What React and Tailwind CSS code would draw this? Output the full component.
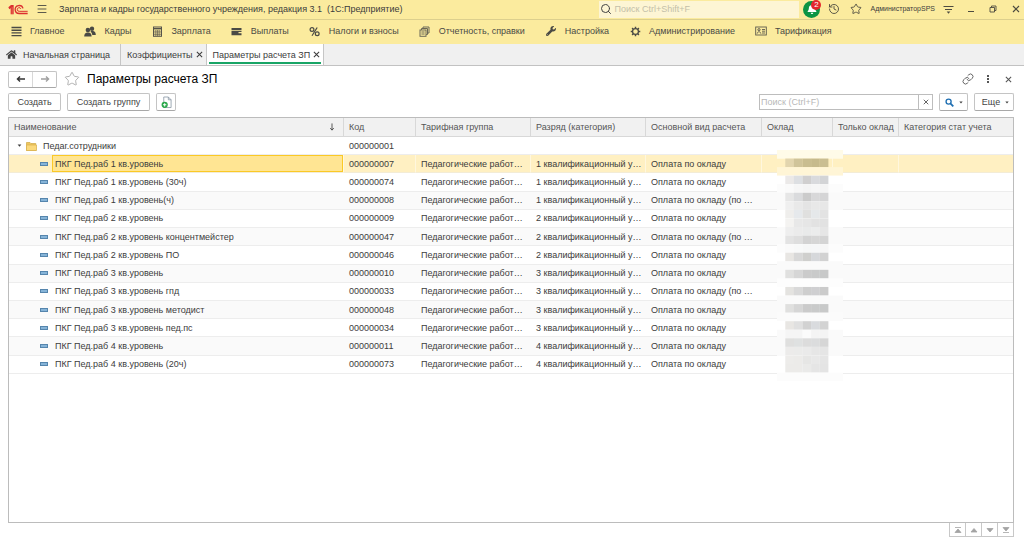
import React from "react";
import { History, Menu, Search, Star } from "lucide-react";
import { FaBell, FaHome, FaWrench } from "react-icons/fa";

function Logo() {
  return (
    <svg viewBox="0 0 60 33" className="h-[11px] w-[20px]" fill="none" stroke="#dc2f2f">
      <path d="M1 10L9 3H17V31H8V13L4 16Z" fill="#dc2f2f" stroke="none" />
      <path d="M12.500 9V31" stroke="#f3a37c" strokeWidth="1.500" />
      <path d="M45 13A12 12 0 1 0 33.500 28.500H59" strokeWidth="4" />
      <path d="M38.500 14.500A5.500 5.500 0 1 0 33.500 22H59" strokeWidth="3" />
    </svg>
  );
}

function LinesIcon() {
  return (
    <svg viewBox="0 0 11 11" className="size-[11px]" stroke="#4a4a45" strokeWidth="1.400">
      <path d="M0.500 1.500H10.500M0.500 4.200H10.500M0.500 6.900H10.500M0.500 9.600H10.500" />
    </svg>
  );
}

function PeopleIcon() {
  return (
    <svg viewBox="0 0 12 11" className="h-[11px] w-[12px]" fill="#4a4a45">
      <circle cx="8" cy="2.800" r="2.200" />
      <path d="M6.900 5H9.200C11 5.500 11.800 6.700 11.800 9H8.300C8 7.200 7.600 6.500 6.600 6.100Z" />
      <circle cx="3.900" cy="4" r="2.300" />
      <path d="M0.200 10.500C0.200 8 1.200 6.700 3 6.400H4.900C6.700 6.700 7.600 8 7.600 10.500Z" />
    </svg>
  );
}

function CalculatorIcon() {
  return (
    <svg viewBox="0 0 11 11" className="size-[11px]" stroke="#55534a">
      <rect x="1.500" y="1" width="8" height="9.300" fill="none" strokeWidth="1" />
      <path d="M2 2.700H9" strokeWidth="1.400" />
      <path d="M2 5.200H9M2 6.900H9M2 8.600H9M3.800 4V10M5.500 4V10M7.200 4V10" strokeWidth="0.600" />
    </svg>
  );
}

function WalletIcon() {
  return (
    <svg viewBox="0 0 11 11" className="size-[11px]" fill="#4a4a45">
      <rect x="0.500" y="2" width="10" height="2" />
      <path d="M0.500 4.700H10.500V6H7.500V7.300H10.500V9.200H0.500Z" />
    </svg>
  );
}

function PercentIcon() {
  return (
    <svg viewBox="0 0 11 11" className="size-[11px]" fill="none" stroke="#4a4a45" strokeWidth="1.200">
      <circle cx="3" cy="3.500" r="1.900" />
      <circle cx="8.200" cy="7.800" r="1.900" />
      <path d="M8.200 1.500L3 9.800" />
    </svg>
  );
}

function SheetsIcon() {
  return (
    <svg viewBox="0 0 11 11" className="size-[11px]" fill="none" stroke="#6b6856" strokeWidth="1">
      <path d="M4 2.500V1H10V7H8.800M2.500 4V2.500H8.500V8.500H7.200" />
      <rect x="1" y="4" width="6" height="6.300" />
      <path d="M2.400 6H5.600M2.400 8H5.600" />
    </svg>
  );
}

function GearIcon() {
  return (
    <svg viewBox="0 0 12 12" className="size-[11px]" fill="none" stroke="#4a4a45">
      <circle cx="6" cy="6" r="3.200" strokeWidth="1.400" />
      <path
        d="M6 0.800V2.400M6 9.600V11.200M0.800 6H2.400M9.600 6H11.200M2.300 2.300L3.500 3.500M8.500 8.500L9.700 9.700M9.700 2.300L8.500 3.500M2.300 9.700L3.500 8.500"
        strokeWidth="1.600"
      />
    </svg>
  );
}

function CardIcon() {
  return (
    <svg viewBox="0 0 12 10" className="h-[10px] w-[12px]" fill="none" stroke="#5c5a4c">
      <rect x="0.700" y="1" width="10.600" height="8" strokeWidth="0.900" />
      <circle cx="4" cy="3.700" r="1.100" />
      <path d="M2.200 7.600C2.200 5.200 5.800 5.200 5.800 7.600M7 3.500H10M7 5.200H10M7 7H10" strokeWidth="0.900" />
    </svg>
  );
}

function Cross({ className }) {
  return (
    <svg viewBox="0 0 8 8" className={className} stroke="currentColor" strokeWidth="1.200">
      <path d="M1 1L7 7M7 1L1 7" />
    </svg>
  );
}

function Caret({ className }) {
  return (
    <svg viewBox="0 0 6 4" className={className} fill="currentColor">
      <path d="M0.500 0.500H5.500L3 3.500Z" />
    </svg>
  );
}

function Arrow({ className, flip }) {
  return (
    <svg viewBox="0 0 12 10" className={className} fill="none" stroke="currentColor" strokeWidth="1.700">
      <path d={flip ? "M1 5H10.500M7.200 1.800L10.500 5L7.200 8.200" : "M11 5H1.500M4.800 1.800L1.500 5L4.800 8.200"} />
    </svg>
  );
}

function NewSheetIcon() {
  return (
    <svg viewBox="0 0 12 14" className="h-[13px] w-[11px]">
      <path d="M3 1H8L11 4V12.500H3Z" fill="#fff" stroke="#8c99a6" strokeWidth="0.900" />
      <path d="M8 1V4H11" fill="none" stroke="#8c99a6" strokeWidth="0.900" />
      <circle cx="4" cy="9.500" r="3.400" fill="#2aa84a" />
      <path d="M4 7.700V11.300M2.200 9.500H5.800" stroke="#fff" strokeWidth="1.100" />
    </svg>
  );
}

function FolderIcon() {
  return (
    <svg viewBox="0 0 11 10" className="h-[10px] w-[11px] shrink-0">
      <path d="M0.500 1.500H4L5 2.500H9.800V9.500H0.500Z" fill="#efc75c" stroke="#cfa748" strokeWidth="0.700" />
      <path d="M0.500 4H10.500V9.500H0.500Z" fill="#fbd97c" stroke="#d8b04e" strokeWidth="0.700" />
    </svg>
  );
}

const menu = [
  ["Главное", <LinesIcon />],
  ["Кадры", <PeopleIcon />],
  ["Зарплата", <CalculatorIcon />],
  ["Выплаты", <WalletIcon />],
  ["Налоги и взносы", <PercentIcon />],
  ["Отчетность, справки", <SheetsIcon />],
  ["Настройка", <FaWrench className="size-[10px]" />],
  ["Администрирование", <GearIcon />],
  ["Тарификация", <CardIcon />],
];

const rows = [
  ["ПКГ Пед.раб 1 кв.уровень", "000000007", 1, false],
  ["ПКГ Пед.раб 1 кв.уровень (30ч)", "000000074", 1, false],
  ["ПКГ Пед.раб 1 кв.уровень(ч)", "000000008", 1, true],
  ["ПКГ Пед.раб 2 кв.уровень", "000000009", 2, false],
  ["ПКГ Пед.раб 2 кв.уровень концентмейстер", "000000047", 2, true],
  ["ПКГ Пед.раб 2 кв.уровень ПО", "000000046", 2, false],
  ["ПКГ Пед.раб 3 кв.уровень", "000000010", 3, false],
  ["ПКГ Пед.раб 3 кв.уровень гпд", "000000033", 3, true],
  ["ПКГ Пед.раб 3 кв.уровень методист", "000000048", 3, false],
  ["ПКГ Пед.раб 3 кв.уровень пед.пс", "000000034", 3, false],
  ["ПКГ Пед.раб 4 кв.уровень", "000000011", 4, false],
  ["ПКГ Пед.раб 4 кв.уровень (20ч)", "000000073", 4, false],
];

// Each band: the wide backing colour, then the colours of its five blocks.
const bands = [
  ["#fffbe8"],
  [null, "#e2d5ae", "#d0c49a", "#c9bd90", "#c6ba8c", "#cabe92"],
  ["#fff5d6"],
  ["#ffffff", "#ebe9e8", "#dddfe2", "#d0cfcf", "#d9dadd", "#d3d4d6"],
  ["#fcfcfc", "#fafafa", "#f6f6f6", "#f4f4f4", "#f6f6f6", "#f4f4f4"],
  ["#fafafa", "#e6e6e6", "#dadbdd", "#cbcbcb", "#d8d8d9", "#d5d5d6"],
  ["#fafafa", "#efefef", "#e9e9e9", "#e4e4e4", "#e8e8e8", "#e7e7e7"],
  ["#ffffff", "#efeeec", "#e6e9ec", "#e0e0df", "#e5e8ea", "#e3e3e3"],
  ["#ffffff", "#f4f3f1", "#e8e8e8", "#e6e6e6", "#e2e2e2", "#e2e2e2"],
  ["#fafafa", "#eeeeee", "#ebebeb", "#e9eaea", "#ebecec", "#e6e6e6"],
  ["#fafafa", "#e3e3e3", "#dedede", "#d3d3d3", "#d6d6d6", "#d4d4d4"],
  ["#fcfcfc", "#fafafa", "#f8f9f9", "#f6f7f7", "#f6f7f8", "#f6f6f6"],
  ["#ffffff", "#e8e6e3", "#d8d8d8", "#cfcfcd", "#d6d8db", "#d2d2d2"],
  ["#fafafa"],
  ["#fafafa", "#e0e0df", "#d6d6d6", "#cbcbcb", "#c9caca", "#c8c9c9"],
  ["#fdfdfd"],
  ["#ffffff", "#e4e3e0", "#d9d9d9", "#cecece", "#cfcfd1", "#cbcbcb"],
  ["#fafafa"],
  ["#fafafa", "#e0e0df", "#d6d6d6", "#cbcbcb", "#c9caca", "#c8c9c9"],
  ["#fbfbfb"],
  ["#ffffff", "#e8e6e3", "#e0e0e0", "#d2d2d2", "#d9dbde", "#d3d3d3"],
  ["#fafafa", "#f5f5f5", "#f5f5f5", "#fbfbfb", "#f4f4f4", "#f4f4f4"],
  ["#fafafa", "#dfdfde", "#dfe1e1", "#dcdcdc", "#dbdcdd", "#d6d6d6"],
  ["#fafafa", "#ecebea", "#ebebea", "#eaeaea", "#e6e6e6", "#e5e5e5"],
  ["#ffffff", "#edecea", "#ecebe9", "#e6e6e5", "#e8e8e8", "#e5e5e5"],
  ["#ffffff", "#ecebe9", "#ecebe9", "#eaeae9", "#e5e5e5", "#e4e4e4"],
  ["#fcfcfc"],
];

function Mosaic() {
  return (
    <svg
      viewBox="0 0 66 231"
      className="pointer-events-none absolute -top-[5px] left-[15px] h-[231px] w-[66px]"
      aria-hidden="true"
    >
      {bands.map(([back, ...blocks], i) => (
        <g key={i}>
          {back && <rect x="0" y={i * 8.56} width="66" height="8.7" fill={back} />}
          {blocks.map((fill, j) => (
            <rect key={j} x={8.3 + j * 8.6} y={i * 8.56} width="8.7" height="8.7" fill={fill} />
          ))}
        </g>
      ))}
    </svg>
  );
}

const button =
  "flex items-center justify-center rounded-[2px] border border-[#c4c4c4] border-b-[#a8a8a8] bg-white text-[#444]";
const cell = "whitespace-nowrap pl-[5px]";

export default function App() {
  return (
    <div className="flex min-h-screen flex-col bg-white font-['Liberation_Sans',Arial,sans-serif] text-[9px] leading-[12px] text-[#3c3c3c]">
      <header className="bg-[#fbeb9e]">
        <div className="flex h-[20px] items-center border-b border-[#dccf8d] pr-[4px] pb-[1px] pl-[8px]">
          <Logo />
          <button aria-label="Меню" className="ml-[8px] text-[#5c5a4c]">
            <Menu className="size-[12px]" strokeWidth={2} />
          </button>
          <span className="ml-[11px] whitespace-pre">
            Зарплата и кадры государственного учреждения, редакция 3.1  (1С:Предприятие)
          </span>
          <label className="ml-auto flex h-[17px] w-[200px] items-center gap-[2px] bg-[#fdf5d4] pl-[1px]">
            <Search className="size-[12px] text-[#444]" strokeWidth={2} />
            <input
              aria-label="Поиск"
              placeholder="Поиск Ctrl+Shift+F"
              className="min-w-0 flex-1 bg-transparent outline-none placeholder:text-[#c4bfa9]"
            />
          </label>
          <button
            aria-label="Уведомления"
            className="relative ml-[4px] flex size-[17px] items-center justify-center rounded-full bg-[#0b9444] text-white"
          >
            <FaBell className="size-[10px]" />
            <span className="absolute -top-[1px] -right-[1px] flex size-[10px] items-center justify-center rounded-full bg-[#e3262d] text-[8px] leading-[10px]">
              2
            </span>
          </button>
          <button aria-label="История" className="ml-[8px] text-[#4d4b40]">
            <History className="size-[12px]" strokeWidth={1.8} />
          </button>
          <button aria-label="Избранное" className="ml-[10px] text-[#4d4b40]">
            <Star className="size-[12px]" strokeWidth={1.8} />
          </button>
          <button className="ml-[8px] text-[7px]">АдминистраторSPS</button>
          <button aria-label="Настройки" className="ml-[8px] text-[#4d4b40]">
            <svg viewBox="0 0 11 11" className="size-[11px]" stroke="currentColor">
              <path d="M0.500 2.500H10.500M2 5.500H9" />
              <path d="M3.700 7.500H7.300L5.500 9.800Z" fill="currentColor" stroke="none" />
            </svg>
          </button>
          <button aria-label="Свернуть" className="ml-[13px] text-[#4d4b40]">
            <svg viewBox="0 0 8 8" className="size-[8px]" stroke="currentColor">
              <path d="M1 6.500H7" />
            </svg>
          </button>
          <button aria-label="Развернуть" className="ml-[14px] text-[#4d4b40]">
            <svg viewBox="0 0 8 8" className="size-[8px]" fill="none" stroke="currentColor" strokeWidth="0.900">
              <path d="M1 2.500H5.500V7H1ZM2.500 2.500V1H7V5.500H5.500" />
            </svg>
          </button>
          <button aria-label="Закрыть" className="ml-[15px] text-[#4d4b40]">
            <Cross className="size-[8px]" />
          </button>
        </div>
        <nav className="flex h-[24px] items-center gap-[20px] pb-[2px] pl-[10px] text-[#4a4a45]">
          {menu.map(([label, icon]) => (
            <a key={label} href="#" className="flex items-center gap-[8px] whitespace-nowrap">
              <span className="flex w-[12px] justify-center">{icon}</span>
              {label}
            </a>
          ))}
        </nav>
      </header>

      <div className="flex h-[22px] items-stretch border-b border-[#c2c2c2] bg-[#f0f0f0]">
        <button className="flex items-center gap-[6px] border-r border-[#c6c6c6] pr-[10px] pl-[6px]">
          <FaHome className="size-[11px] text-[#444]" />
          Начальная страница
        </button>
        <div className="flex items-center gap-[3px] border-r border-[#c6c6c6] pr-[3px] pl-[6px]">
          <a href="#">Коэффициенты</a>
          <button aria-label="Закрыть вкладку Коэффициенты">
            <Cross className="size-[7px]" />
          </button>
        </div>
        <div className="flex border-r border-[#c6c6c6] bg-white px-[2px] pb-[1px]">
          <div className="flex items-center gap-[3px] border-b-2 border-b-[#19a566] pt-[3px] pr-[1px] pl-[4px]">
            <a href="#">Параметры расчета ЗП</a>
            <button aria-label="Закрыть вкладку Параметры расчета ЗП">
              <Cross className="size-[7px]" />
            </button>
          </div>
        </div>
      </div>

      <main className="flex flex-1 flex-col px-[8px] pb-[5px]">
        <div className="flex h-[26px] items-center">
          <div className="flex h-[17px] w-[49px] rounded-[2px] border border-[#c4c4c4] border-b-[#a8a8a8]">
            <button aria-label="Назад" className="flex flex-1 items-center justify-center border-r border-[#d8d8d8]">
              <Arrow className="h-[8px] w-[10px] text-[#333]" />
            </button>
            <button aria-label="Вперед" className="flex flex-1 items-center justify-center">
              <Arrow flip className="h-[8px] w-[10px] text-[#a0a0a0]" />
            </button>
          </div>
          <button aria-label="Добавить в избранное" className="ml-[7px] text-[#a5a5a5]">
            <Star className="size-[16px]" strokeWidth={1.3} />
          </button>
          <h1 className="ml-[7px] text-[12px] leading-[16px] text-black">Параметры расчета ЗП</h1>
          <button aria-label="Получить ссылку" className="ml-auto text-[#666]">
            <svg viewBox="0 0 24 24" className="size-[12px]" fill="none" stroke="currentColor" strokeWidth="2" strokeLinecap="round">
              <path d="M10 13a5 5 0 0 0 7.540.540l3-3a5 5 0 0 0-7.070-7.070l-1.720 1.710" />
              <path d="M14 11a5 5 0 0 0-7.540-.540l-3 3a5 5 0 0 0 7.070 7.070l1.710-1.710" />
            </svg>
          </button>
          <button aria-label="Действия" className="ml-[12px] text-[#555]">
            <svg viewBox="0 0 4 10" className="h-[10px] w-[4px]" fill="currentColor">
              <rect x="1" y="1" width="2" height="2" />
              <rect x="1" y="4" width="2" height="2" />
              <rect x="1" y="7" width="2" height="2" />
            </svg>
          </button>
          <button aria-label="Закрыть" className="mr-[4px] ml-[15px] text-[#555]">
            <Cross className="size-[7px]" />
          </button>
        </div>

        <div className="mr-[2px] flex h-[20px] items-center">
          <button className={`${button} h-[18px] w-[53px]`}>Создать</button>
          <button className={`${button} ml-[6px] h-[18px] w-[83px]`}>Создать группу</button>
          <button aria-label="Создать копированием" className={`${button} ml-[6px] h-[18px] w-[20px]`}>
            <NewSheetIcon />
          </button>
          <div className="ml-auto flex h-[16px] w-[174px] border border-[#bdbdbd]">
            <input
              aria-label="Поиск по списку"
              placeholder="Поиск (Ctrl+F)"
              className="min-w-0 flex-1 px-px outline-none placeholder:text-[#b8b8b8]"
            />
            <button
              aria-label="Очистить поиск"
              className="flex w-[14px] items-center justify-center border-l border-[#bdbdbd] text-[#555]"
            >
              <Cross className="size-[6px]" />
            </button>
          </div>
          <button aria-label="Найти" className={`${button} ml-[6px] h-[18px] w-[29px] gap-[5px]`}>
            <svg viewBox="0 0 10 10" className="size-[9px]" fill="none" stroke="#1f6fb2">
              <circle cx="4" cy="4" r="2.800" strokeWidth="1.500" />
              <path d="M6.200 6.200L9.200 9.200" strokeWidth="2" />
            </svg>
            <Caret className="h-[3px] w-[4px]" />
          </button>
          <button className={`${button} ml-[6px] h-[18px] w-[40px] gap-[5px] pl-[3px]`}>
            Еще
            <Caret className="h-[3px] w-[4px]" />
          </button>
        </div>

        <div className="mt-[5px] mr-[2px] flex-1 border border-[#bcbcbc]">
          <table className="h-[256px] w-full table-fixed border-separate border-spacing-0 text-left">
            <colgroup>
              <col />
              <col className="w-[72px]" />
              <col className="w-[115px]" />
              <col className="w-[115px]" />
              <col className="w-[116px]" />
              <col className="w-[71px]" />
              <col className="w-[66px]" />
              <col className="w-[114px]" />
            </colgroup>
            <thead>
              <tr className="h-[19px] bg-[#f1f1f1] text-[#555] *:border-r *:border-b *:border-[#d8d8d8] *:p-0 *:font-normal *:last:border-r-0">
                <th>
                  <div className="flex items-center justify-between pr-[8px] pl-[5px]">
                    Наименование
                    <svg viewBox="0 0 6 9" className="h-[8px] w-[6px]" fill="none" stroke="#444">
                      <path d="M3 0.500V8M1 5.800L3 8L5 5.800" />
                    </svg>
                  </div>
                </th>
                <th><div className={cell}>Код</div></th>
                <th><div className={cell}>Тарифная группа</div></th>
                <th><div className={cell}>Разряд (категория)</div></th>
                <th><div className={cell}>Основной вид расчета</div></th>
                <th><div className={cell}>Оклад</div></th>
                <th><div className={cell}>Только оклад</div></th>
                <th><div className={cell}>Категория стат учета</div></th>
              </tr>
            </thead>
            <tbody>
              <tr className="h-[18px] *:border-b *:border-[#ededed] *:p-0">
                <td>
                  <div className="flex items-center pl-[8px]">
                    <Caret className="h-[3px] w-[5px]" />
                    <span className="ml-[4px]"><FolderIcon /></span>
                    <span className="ml-[6px]">Педаг.сотрудники</span>
                  </div>
                </td>
                <td><div className={cell}>000000001</div></td>
                <td colSpan={6}></td>
              </tr>
              {rows.map(([name, code, level, hourly], i) => (
                <tr
                  key={code}
                  className={
                    i === 0
                      ? "h-[18px] bg-[#fff0c2] *:border-r *:border-b *:border-r-[#fff7de] *:border-b-[#f3ecd6] *:p-0 *:last:border-r-0"
                      : "h-[18px] odd:bg-white even:bg-[#fafafa] *:border-b *:border-[#ededed] *:p-0"
                  }
                >
                  <td className="h-[18px]">
                    <div className="flex h-full items-center pl-[31px]">
                      <span className="h-[4px] w-[8px] shrink-0 border border-[#5585ad] bg-[#86b4d8]" />
                      <span
                        className={
                          i === 0
                            ? "ml-[4px] flex h-full flex-1 items-center border border-[#fbc926] bg-[#ffe593] pl-[2px]"
                            : "ml-[7px]"
                        }
                      >
                        {name}
                      </span>
                    </div>
                  </td>
                  <td><div className={cell}>{code}</div></td>
                  <td><div className={cell}>Педагогические работ…</div></td>
                  <td><div className={cell}>{level} квалификационный у…</div></td>
                  <td><div className={cell}>{hourly ? "Оплата по окладу (по …" : "Оплата по окладу"}</div></td>
                  <td className={i === 0 ? "relative" : ""}>{i === 0 && <Mosaic />}</td>
                  <td></td>
                  <td></td>
                </tr>
              ))}
            </tbody>
          </table>
        </div>
        <div className="mr-[2px] flex h-[14px] justify-end">
          {[
            ["В начало", "M2 1.500H8M2 6.500L5 3L8 6.500Z"],
            ["Вверх", "M2 6L5 2.500L8 6Z"],
            ["Вниз", "M2 2.500L5 6L8 2.500Z"],
            ["В конец", "M2 6.500H8M2 1.500L5 5L8 1.500Z"],
          ].map(([label, d]) => (
            <button
              key={label}
              aria-label={label}
              className="flex w-[16px] items-center justify-center border-r border-b border-[#c8c8c8] first:w-[17px] first:border-l"
            >
              <svg viewBox="0 0 10 8" className="h-[8px] w-[10px]" fill="#a3a3a3" stroke="#a3a3a3" strokeWidth="0.800">
                <path d={d} />
              </svg>
            </button>
          ))}
        </div>
      </main>
    </div>
  );
}
